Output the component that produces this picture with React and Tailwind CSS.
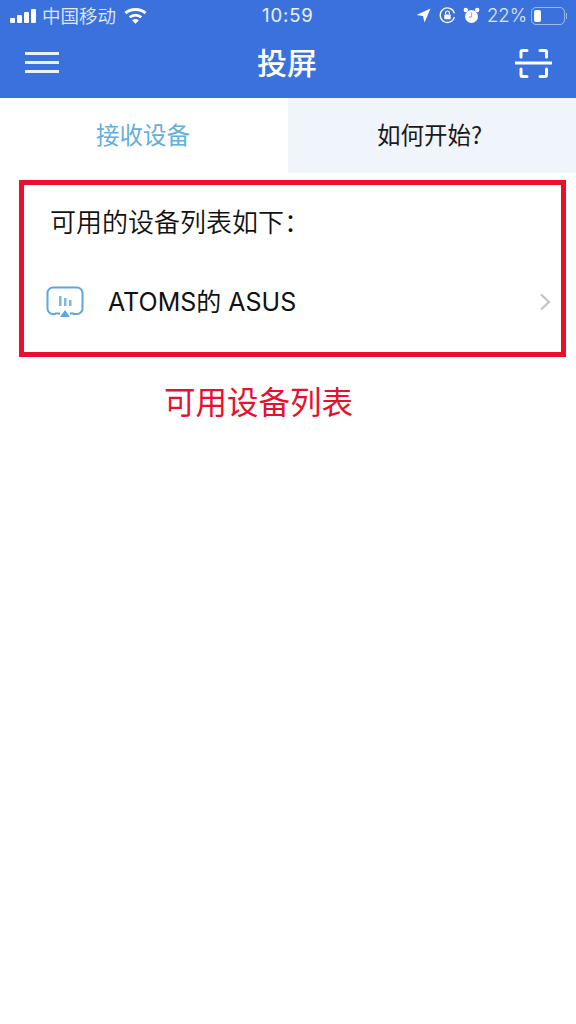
import React from 'react';

const cjk = { fontFamily: '"Noto Sans CJK SC", "Noto Sans", sans-serif' };

const StatusBar = () => (
    <div className="h-[31px] pl-[10px] pr-[9px] flex items-center justify-between text-white/90">
        <div className="flex items-center w-[200px]">
            <svg width="26" height="16" viewBox="0 0 26 16" fill="#fff">
                <rect x="0" y="10" width="5" height="5" rx="1" />
                <rect x="7" y="7" width="5" height="8" rx="1" />
                <rect x="14" y="4" width="5" height="11" rx="1" />
                <rect x="21" y="1" width="5" height="14" rx="1" />
            </svg>
            <span className="ml-[6px] text-[18.5px] leading-none text-white/85 font-[350]">中国移动</span>
            <svg className="ml-[8px]" width="23" height="17" viewBox="0 0 24 17" fill="none" stroke="#fff" strokeWidth="3">
                <path d="M1.5 6 C7 1 17 1 22.5 6" />
                <path d="M6 10.3 C9.5 7.3 14.5 7.3 18 10.3" />
                <path d="M12 16.5 L9 13.6 C10.6 12.4 13.4 12.4 15 13.6 Z" fill="#fff" strokeWidth="1" />
            </svg>
        </div>
        <span className="absolute left-[262px] text-[18.5px] leading-none tracking-[0.9px]" style={{ fontFamily: 'Inter, sans-serif' }}>10:59</span>
        <div className="flex items-center">
            <svg width="15" height="15" viewBox="0 0 15 15" fill="#fff"><path d="M14.5 0.5 L0.5 7 L7 8 L8.5 14.5 Z" /></svg>
            <svg className="ml-[8px]" width="17" height="17" viewBox="0 0 16 16" fill="none">
                <path d="M14.5 9.5 A6.8 6.8 0 1 1 14.5 6" stroke="#fff" strokeWidth="1.2" />
                <rect x="5" y="7" width="6" height="4.6" rx="0.8" fill="#fff" />
                <path d="M6.2 7 V5.6 A1.8 1.8 0 0 1 9.8 5.6 V7" stroke="#fff" strokeWidth="1.1" />
            </svg>
            <svg className="ml-[7px]" width="17" height="17" viewBox="0 0 17 17" fill="none">
                <circle cx="8.5" cy="9.5" r="6.5" fill="#fff" />
                <circle cx="2.8" cy="3" r="2.2" fill="#fff" />
                <circle cx="14.2" cy="3" r="2.2" fill="#fff" />
                <path d="M8.5 5.5 V9.8 H5.8" stroke="#c9a9a0" strokeWidth="1.2" />
            </svg>
            <span className="ml-[7px] text-[18.5px] leading-none text-white/85 font-light" style={{ fontFamily: 'Inter, sans-serif' }}>22%</span>
            <div className="ml-[4px] w-[34px] h-[18px] rounded-[5px] border border-white/50 p-[2px]">
                <div className="w-[7px] h-full rounded-[2px] bg-white" />
            </div>
            <div className="ml-[1px] w-[1px] h-[6px] bg-white/50" />
        </div>
    </div>
);

const App = () => {
    return (
        <div className="relative w-[576px] h-[1024px] bg-white overflow-hidden" style={cjk}>
            <header className="h-[98px] bg-[#3b71dd]">
                <StatusBar />
                <div className="h-[67px] pl-[25px] pr-[24px] flex items-center justify-between">
                    <div className="w-[34px] flex flex-col gap-[6px] mt-[-5px]">
                        <div className="h-[3px] bg-white/90" />
                        <div className="h-[3px] bg-white/90" />
                        <div className="h-[3px] bg-white/90" />
                    </div>
                    <h1 className="text-[30px] leading-none font-medium text-white mt-[-8px]">投屏</h1>
                    <svg className="mt-[-3px]" width="37" height="29" viewBox="0 0 37 29" fill="none" stroke="#fff" strokeWidth="3" strokeLinecap="round">
                        <path d="M6 8 V3 A1.5 1.5 0 0 1 7.5 1.5 H12" />
                        <path d="M25 1.5 H30 A1.5 1.5 0 0 1 31.5 3 V8" />
                        <path d="M6 20 V26 A1.5 1.5 0 0 0 7.5 27.5 H12" />
                        <path d="M25 27.5 H30 A1.5 1.5 0 0 0 31.5 26 V20" />
                        <path d="M0 14 H37" strokeLinecap="butt" />
                    </svg>
                </div>
            </header>

            <div className="flex h-[75px]">
                <div className="w-[288px] flex items-center justify-center pr-[2px] pb-[1px] text-[23.5px] text-[#62aedd]">接收设备</div>
                <div className="w-[288px] flex items-center justify-center pr-[5px] pb-[1px] text-[23.5px] text-[#1a1a1a] bg-[#f0f4fb]">如何开始?</div>
            </div>

            <section className="ml-[19px] mt-[7px] w-[547px] h-[177px] border-[5px] border-[#ec0f2d] pl-[22px] pr-[10px]">
                <p className="mt-[19px] ml-[4px] text-[26px] leading-[34px] font-[350] text-[#111]">可用的设备列表如下：</p>
                <div className="mt-[48px] flex items-center">
                    <svg width="38" height="32" viewBox="0 0 38 32" fill="none">
                        <path d="M9 28 H7 A5.5 5.5 0 0 1 1.5 22.5 V7 A5.5 5.5 0 0 1 7 1.5 H31 A5.5 5.5 0 0 1 36.5 7 V22.5 A5.5 5.5 0 0 1 31 28 H28" stroke="#5ba6e3" strokeWidth="2" strokeLinecap="round" />
                        <path d="M9 27.5 H14 M24 27.5 H28" stroke="#5ba6e3" strokeWidth="2" />
                        <path d="M19 24 L24 31 H14 Z" fill="#5ba6e3" />
                        <rect x="13" y="10" width="2.5" height="10" fill="#7fb6e6" />
                        <rect x="18" y="12" width="2.5" height="8" fill="#7fb6e6" />
                        <rect x="23" y="14" width="2.5" height="6" fill="#7fb6e6" />
                    </svg>
                    <span className="ml-[24px] text-[25px] leading-none text-[#111] flex-1" style={{ fontFamily: '"Inter", "Noto Sans CJK SC", sans-serif' }}>ATOMS的 ASUS</span>
                    <svg width="12" height="18" viewBox="0 0 12 18" fill="none" stroke="#c4c4c8" strokeWidth="2.2"><path d="M2 1.5 L10 9 L2 16.5" /></svg>
                </div>
            </section>

            <p className="mt-[23px] ml-[164px] text-[31.5px] leading-[40px] text-[#ec0f2d]">可用设备列表</p>
        </div>
    );
};

export default App;
